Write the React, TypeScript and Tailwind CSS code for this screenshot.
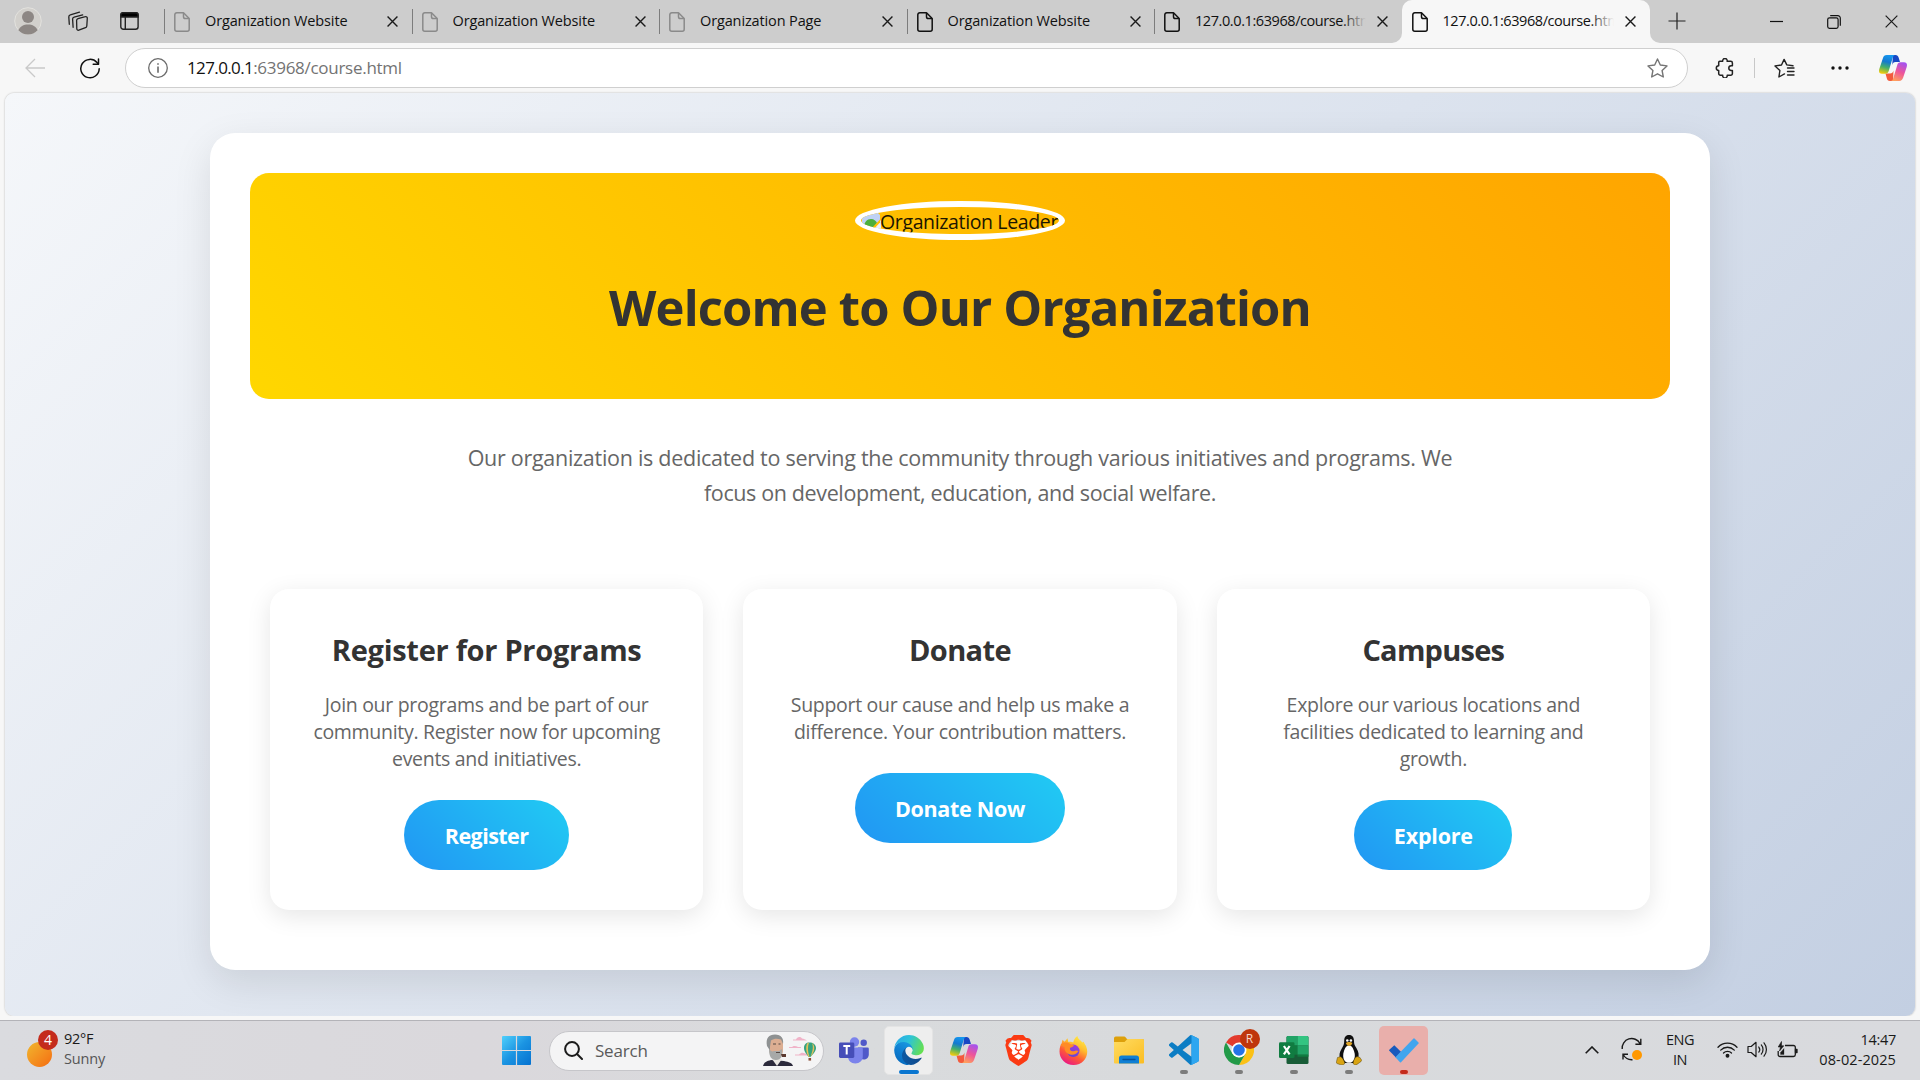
import React from "react";
import { SiBrave } from "react-icons/si";

/* ---------- browser chrome icons ---------- */

function DocIcon({ color }: { color: string }) {
  return (
    <svg className="h-5 w-4 shrink-0" viewBox="0 0 16 20" fill="none" stroke={color} strokeWidth="1.5" strokeLinejoin="round">
      <path d="M3 .8h6.5L15.2 6.500v10.7a2 2 0 0 1-2 2H2.800a2 2 0 0 1-2-2V2.800a2 2 0 0 1 2-2z" />
      <path d="M9.500 1v3.700a1.800 1.800 0 0 0 1.800 1.800H15" />
    </svg>
  );
}

function CloseIcon({ size }: { size: "sm" | "lg" }) {
  return (
    <svg className={size === "sm" ? "h-[11px] w-[11px] shrink-0" : "h-[13px] w-[13px] shrink-0"} viewBox="0 0 12 12" stroke="#1a1a1a" strokeWidth={size === "sm" ? 1.5 : 1.1} fill="none">
      <path d="M.6.6l10.800 10.800M11.400.6L.6 11.400" />
    </svg>
  );
}

function CopilotIcon({ id, className }: { id: string; className: string }) {
  return (
    <svg className={className} viewBox="0 0 28 26">
      <defs>
        <linearGradient id={`${id}-a`} x1="0.5" y1="0" x2="0.25" y2="1">
          <stop offset="0" stopColor="#1596ee" />
          <stop offset=".35" stopColor="#1479d0" />
          <stop offset=".65" stopColor="#45b06a" />
          <stop offset="1" stopColor="#f5cc0a" />
        </linearGradient>
        <linearGradient id={`${id}-b`} x1="0.7" y1="0" x2="0.3" y2="1">
          <stop offset="0" stopColor="#a552ee" />
          <stop offset=".5" stopColor="#ee5599" />
          <stop offset="1" stopColor="#ffa15c" />
        </linearGradient>
      </defs>
      <path d="M14 0h2.500c1.800 0 2.600 1 3.100 2.600L21 7h-4.500c-2 0-2.700 1-3.300 3z" fill="#1848c4" />
      <path d="M14 26h-3c-2 0-2.700-1-3.200-2.700L6.500 18.500H11c2 0 3-1 3.500-3z" fill="#f35a3c" />
      <path d="M7.800 0h8.600c-1.500.2-2.200 1.200-2.700 2.800L9.800 15.800c-.6 2-1.500 2.900-3.500 2.900H3c-2.700 0-3.500-2-2.700-4.600L3.900 3.200C4.600 1.200 5.600 0 7.800 0z" fill={`url(#${id}-a)`} />
      <path d="M20.200 26h-8.600c1.500-.2 2.200-1.200 2.700-2.800l3.900-13c.6-2 1.500-2.900 3.500-2.900H25c2.700 0 3.500 2 2.700 4.600l-3.600 10.900c-.7 2-1.700 3.200-3.900 3.200z" fill={`url(#${id}-b)`} />
    </svg>
  );
}

function Tab({ title, dim, active, fade }: { title: string; dim?: boolean; active?: boolean; fade?: boolean }) {
  return (
    <div className={active ? "relative flex h-[43px] w-[248px] items-center rounded-t-[10px] bg-[#f7f7f7] pl-[10px]" : "relative flex h-[43px] w-[247.5px] items-center pl-[10px]"}>
      {!active && <div className="absolute top-[9px] left-0 h-[25px] w-px bg-[#7d7d7d]" />}
      {active && (
        <>
          <div className="absolute bottom-0 -left-[10px] h-[10px] w-[10px] bg-[#f7f7f7]">
            <div className="h-full w-full rounded-br-[10px] bg-[#cdcdcd]" />
          </div>
          <div className="absolute -right-[10px] bottom-0 h-[10px] w-[10px] bg-[#f7f7f7]">
            <div className="h-full w-full rounded-bl-[10px] bg-[#cdcdcd]" />
          </div>
        </>
      )}
      <DocIcon color={dim ? "#8a8a8a" : "#111111"} />
      <div className={`relative mb-[2px] ml-[15px] w-[171px] overflow-hidden text-[14.5px] leading-5 whitespace-nowrap text-[#111] ${fade ? "tracking-[-0.42px]" : "tracking-[-0.13px]"}`}>
        {title}
        {fade && <div className={active ? "absolute inset-y-0 right-0 w-6 bg-linear-to-r from-transparent to-[#f7f7f7]" : "absolute inset-y-0 right-0 w-6 bg-linear-to-r from-transparent to-[#cdcdcd]"} />}
      </div>
      <div className="ml-[11px] flex">
        <CloseIcon size="sm" />
      </div>
    </div>
  );
}

function TabBar() {
  return (
    <div className="flex h-[43px] bg-[#cdcdcd]">
      <div className="flex w-[164px] items-center pb-px">
        <svg className="ml-[14px] h-[28px] w-[28px]" viewBox="0 0 28 28">
          <circle cx="14" cy="14" r="13.300" fill="#d2d0cc" stroke="#e3e2de" />
          <circle cx="14" cy="10" r="6" fill="#8d8784" />
          <path d="M4.300 23.200C6 19.500 9.500 17.500 14 17.500s8 2 9.700 5.700A13.300 13.300 0 0 1 14 27.500a13.300 13.300 0 0 1-9.700-4.300z" fill="#8d8784" />
        </svg>
        <svg className="ml-[25px] h-[21px] w-[21px]" viewBox="0 0 21 21" fill="none" stroke="#222" strokeWidth="1.300" strokeLinejoin="round" strokeLinecap="round">
          <path d="M11 7.600l7.400-1.900a1.500 1.500 0 0 1 1.900 1.600l-.5 7.700a2 2 0 0 1-1.300 1.700l-6.700 2.500a1.500 1.500 0 0 1-2-1.400l-.2-8.300A2 2 0 0 1 11 7.600z" />
          <path d="M6.100 16.300l-.5-8.200a2 2 0 0 1 1.500-2l8.600-2.300" />
          <path d="M2.300 13.300L1.800 5.900a2 2 0 0 1 1.500-2L12.500 1.200" />
        </svg>
        <svg className="ml-[32px] h-[18px] w-[19px]" viewBox="0 0 19 18" fill="none" stroke="#222" strokeWidth="1.400">
          <rect x=".8" y=".8" width="17.300" height="16.400" rx="2.500" />
          <path d="M.8 5V3A2.200 2.200 0 0 1 3 .8h13A2.200 2.200 0 0 1 18.100 3v2z" fill="#000" />
          <path d="M5.300 5v12" />
        </svg>
      </div>
      <Tab title="Organization Website" dim />
      <Tab title="Organization Website" dim />
      <Tab title="Organization Page" dim />
      <Tab title="Organization Website" />
      <Tab title="127.0.0.1:63968/course.html" fade />
      <Tab title="127.0.0.1:63968/course.html" active fade />
      <svg className="mt-[12px] ml-[18px] h-[18px] w-[18px]" viewBox="0 0 18 18" stroke="#222" strokeWidth="1.200">
        <path d="M9 .5v17M.5 9h17" />
      </svg>
      <div className="ml-auto flex items-center pr-[22px]">
        <svg className="h-[13px] w-[13px]" viewBox="0 0 13 13" stroke="#111" strokeWidth="1.200">
          <path d="M0 6.500h13" />
        </svg>
        <svg className="ml-[44px] h-[14px] w-[14px]" viewBox="0 0 14 14" fill="none" stroke="#111" strokeWidth="1.200">
          <rect x=".7" y="2.800" width="10.400" height="10.500" rx="1.800" />
          <path d="M3.200.7h7.600a2.500 2.500 0 0 1 2.500 2.500v7.600" />
        </svg>
        <div className="ml-[44px]">
          <CloseIcon size="lg" />
        </div>
      </div>
    </div>
  );
}

function Toolbar() {
  return (
    <div className="flex h-[50px] items-center bg-[#f7f7f7]">
      <svg className="ml-[25px] h-5 w-5" viewBox="0 0 20 20" fill="none" stroke="#c9c9c9" strokeWidth="1.300">
        <path d="M10 1L1 10l9 9M1 10h19" />
      </svg>
      <svg className="ml-[35px] h-[21px] w-[20px]" viewBox="0 0 20 21" fill="none" stroke="#111" strokeWidth="1.500" strokeLinecap="round" strokeLinejoin="round">
        <path d="M19.200 10.700A9.200 9.200 0 1 1 17 4.600l1.200 1.400" />
        <path d="M18.500 1v5.300h-5.300" />
      </svg>
      <div className="ml-[25px] flex h-[40px] w-[1563px] items-center rounded-full border border-[#cfcfcf] bg-white pl-[22px] pr-[19px]">
        <svg className="h-5 w-5" viewBox="0 0 20 20" fill="none" stroke="#6b6b6b" strokeWidth="1.300">
          <circle cx="10" cy="10" r="9.300" />
          <path d="M10 8.500v6.300M10 5.200v1.600" strokeWidth="1.600" />
        </svg>
        <div className="mb-px ml-[19px] text-[17px] leading-6 whitespace-nowrap text-[#737373]">
          <span className="tracking-[-0.62px] text-[#111]">127.0.0.1</span>
          <span className="tracking-[-0.28px]">:63968/course.html</span>
        </div>
        <svg className="ml-auto h-5 w-[21px]" viewBox="0 0 21 20" fill="none" stroke="#757575" strokeWidth="1.400" strokeLinejoin="round">
          <path d="M10.500 1l2.800 6 6.700.9-4.900 4.600 1.200 6.500-5.800-3.200L4.700 19l1.200-6.500L1 7.900 7.700 7z" />
        </svg>
      </div>
      <svg className="ml-[27px] h-[20px] w-[19px]" viewBox="0 0 19 20" fill="none" stroke="#222" strokeWidth="1.500" strokeLinejoin="round">
        <path d="M4.800 3.300h2.900a2.300 2.300 0 1 1 4.500 0h3.500a1.700 1.700 0 0 1 1.700 1.700v2.700h-1.200a2.400 2.400 0 0 0 0 4.800h1.200v3a1.700 1.700 0 0 1-1.700 1.700h-3.500a2.300 2.300 0 1 1-4.500 0H5.400a1.700 1.700 0 0 1-1.700-1.700v-3a2.400 2.400 0 1 1 0-4.800V4.500a1.200 1.200 0 0 1 1.100-1.200z" />
      </svg>
      <div className="ml-[20px] h-5 w-px bg-[#c8c8c8]" />
      <svg className="ml-[19px] h-5 w-[21px]" viewBox="0 0 21 20" fill="none" stroke="#222" strokeWidth="1.400" strokeLinejoin="round" strokeLinecap="round">
        <path d="M10.500 15.900L4.900 19l1-6.500L1 7.900 7.500 7l2.600-5.600 2.700 5.500 6.200.9M13.500 10h6.500M13.500 13.500h6.500M13.500 17h6.500" />
      </svg>
      <svg className="ml-[36px] h-1 w-[18px]" viewBox="0 0 18 4" fill="#111">
        <circle cx="2" cy="2" r="1.700" />
        <circle cx="9" cy="2" r="1.700" />
        <circle cx="16" cy="2" r="1.700" />
      </svg>
      <CopilotIcon id="cp-toolbar" className="ml-[30px] h-[26px] w-[28px]" />
    </div>
  );
}

/* ---------- page ---------- */

function BrokenImage() {
  return (
    <div className="flex h-[39px] w-[210px] overflow-hidden rounded-[50%] border-[6px] border-white pt-[2px] whitespace-nowrap">
      <svg className="mt-[2px] h-[19px] w-[20px] shrink-0" viewBox="0 0 20 19">
        <path d="M1 0h14l4 4v15H1z" fill="#bfd2f5" />
        <path d="M3 17c0-6 3-9 7-9 3 0 5 2 6 4l-5 7H3z" fill="#4caf3c" />
        <path d="M10 19L20 9v10z" fill="#e9f0fc" />
        <path d="M9 19L19 8.500v3L12 19z" fill="#ffc000" />
      </svg>
      <span className="-ml-px text-[19.5px] leading-[25px] tracking-[-0.36px] text-[#1c1600]">Organization Leader</span>
    </div>
  );
}

const CARDS = [
  { title: "Register for Programs", lines: ["Join our programs and be part of our", "community. Register now for upcoming", "events and initiatives."], action: "Register", width: "w-[165px]", titleTrack: "tracking-[-0.28px]", actionTrack: "tracking-[-0.55px]" },
  { title: "Donate", lines: ["Support our cause and help us make a", "difference. Your contribution matters."], action: "Donate Now", width: "w-[210px]", titleTrack: "tracking-[-0.6px]", actionTrack: "tracking-[-0.3px]" },
  { title: "Campuses", lines: ["Explore our various locations and", "facilities dedicated to learning and", "growth."], action: "Explore", width: "w-[158px]", titleTrack: "tracking-[-0.75px]", actionTrack: "tracking-[-0.2px]" },
];

function Page() {
  return (
    <main className="mx-[5px] h-[923px] overflow-hidden rounded-[9px] bg-[linear-gradient(135deg,#f5f7fa,#c3cfe2)] pt-[40px] shadow-[0_0_2px_rgba(0,0,0,0.3)]">
      <div className="mx-auto h-[837px] w-[1500px] rounded-[25px] bg-white p-[40px] shadow-[0_12px_38px_rgba(0,0,0,0.1)]">
        <header className="flex h-[226px] flex-col items-center rounded-[19px] bg-[linear-gradient(45deg,#ffd700,#ffa500)] pt-[28px]">
          <BrokenImage />
          <h1 className="mt-[34px] text-[49px] leading-[67px] font-bold tracking-[-0.86px] text-[#333]">Welcome to Our Organization</h1>
        </header>
        <div className="mt-[41px] text-center text-[21.5px] leading-[35px] text-[#666]">
          <p className="tracking-[-0.28px]">Our organization is dedicated to serving the community through various initiatives and programs. We</p>
          <p className="tracking-[-0.37px]">focus on development, education, and social welfare.</p>
        </div>
        <div className="mt-[79px] grid h-[321px] grid-cols-3 gap-[40px] px-[20px]">
          {CARDS.map((card) => (
            <section key={card.title} className="flex flex-col items-center rounded-[19px] bg-white pt-[41px] text-center shadow-[0_6px_25px_rgba(0,0,0,0.1)]">
              <h3 className={`text-[29px] leading-[40px] font-bold text-[#333] ${card.titleTrack}`}>{card.title}</h3>
              <div className="mt-[21px] text-[19.5px] leading-[27px] tracking-[-0.3px] text-[#666]">
                {card.lines.map((line) => (
                  <p key={line}>{line}</p>
                ))}
              </div>
              <button className={`mt-[28px] h-[70px] rounded-[35px] bg-[linear-gradient(45deg,#2196f3,#21cbf3)] pt-[3px] text-[21.5px] font-bold text-white ${card.width} ${card.actionTrack}`}>{card.action}</button>
            </section>
          ))}
        </div>
      </div>
    </main>
  );
}

/* ---------- taskbar ---------- */

function SearchArt() {
  return (
    <svg className="h-[33px] w-[54px]" viewBox="0 0 54 33">
      <path d="M30 5.500h3c1-2.500 4-3.500 6-1 2 0 3 1 5 2H30zM26 13h3c1-1.500 4-1.500 6 0h3v1H26zM32 20.500h4c2-2 4-2 6-1l7 1v1H32z" fill="#f0b3c8" />
      <path d="M0 32c1-4 4-5 8-6l13 1c5 1 8 2 9 5z" fill="#2c2a3c" />
      <path d="M9 25l5 7 5-7z" fill="#e9e6e2" />
      <path d="M6 8c0-4 3-7 7-7s7 3 7 8v7c0 5-3 8-6 8s-8-3-8-9z" fill="#dcae92" />
      <path d="M4 12C2.500 4 6 .5 12 .5s9 4 8 9.500l-2-4.500c-4-1-7-1-10 1l-1 6v4z" fill="#8e9192" />
      <path d="M6 15c2 2 3 3 5 2h5l3-2c1 7-1 11-6 11S6 22 6 15z" fill="#a7a9a8" />
      <path d="M10 10h3M15.500 10h2M13 18.500h4" stroke="#574a45" strokeWidth="1.200" />
      <path d="M18 20h5v3h-4z" fill="#5a3930" />
      <path d="M41 14c0-3.500 2-5.500 5.500-5.500S53 10.500 53 14s-3.500 6.500-5.500 9h-2C44 20.500 41 18 41 14z" fill="#35a37f" />
      <path d="M44 9.500c-1.500 4-1 9 1.500 13.500h1C44.500 17 44.500 13 46 8.500zM49 9c2 4.500 0 9.500-1.500 14l2-3c2-3 2.500-7.500.5-10z" fill="#e5c05c" />
      <path d="M45.500 24h2.600v2.600h-2.600z" fill="#8d4f36" />
    </svg>
  );
}

function TeamsIcon() {
  return (
    <svg className="h-[27px] w-[30px]" viewBox="0 0 30 27">
      <circle cx="15.500" cy="5" r="4.700" fill="#7b83eb" />
      <circle cx="24.700" cy="5.700" r="3.200" fill="#5059c9" />
      <path d="M19 10.500h9.500a1.300 1.300 0 0 1 1.300 1.300v5.700c0 3-2.500 5-5 5s-5-1-5.800-3z" fill="#5059c9" />
      <path d="M9 10.500h13.500a1.300 1.300 0 0 1 1.300 1.300v7.700c0 4-3.200 7-7.500 7S9 23.500 9 19.500z" fill="#7b83eb" />
      <rect x="0" y="5.500" width="15.300" height="15.500" rx="1.400" fill="#464eb8" />
      <path d="M4.300 9h6.900M7.700 9v8.500" stroke="#fff" strokeWidth="2" />
    </svg>
  );
}

function EdgeIcon() {
  return (
    <svg className="h-[30px] w-[30px]" viewBox="4 0 257 259">
      <defs>
        <linearGradient id="edge-dark" x1="0" y1="0" x2="1" y2="0">
          <stop offset="0" stopColor="#0c59a4" />
          <stop offset="1" stopColor="#114a8b" />
        </linearGradient>
        <linearGradient id="edge-mid" x1="0.8" y1="0" x2="0.3" y2="1">
          <stop offset="0" stopColor="#1b9de2" />
          <stop offset=".5" stopColor="#0f7fd2" />
          <stop offset="1" stopColor="#0669bd" />
        </linearGradient>
        <linearGradient id="edge-top" x1="0" y1="0.3" x2="1" y2="0.6">
          <stop offset="0" stopColor="#2aa9e8" />
          <stop offset=".45" stopColor="#2dc3d8" />
          <stop offset="1" stopColor="#66e04f" />
        </linearGradient>
      </defs>
      <path fill="url(#edge-dark)" d="M235.680 195.460a93.730 93.730 0 0 1-10.540 4.710 101.870 101.870 0 0 1-35.900 6.460c-47.320 0-88.540-32.550-88.540-74.320A31.480 31.480 0 0 1 117.130 105c-42.800 1.800-53.800 46.400-53.800 72.530 0 73.880 68.090 81.370 82.760 81.370 7.910 0 19.840-2.300 27-4.560l1.310-.44a128.340 128.340 0 0 0 66.600-52.800 4 4 0 0 0-5.320-5.640z" />
      <path fill="url(#edge-mid)" d="M110.340 246.340A79.200 79.200 0 0 1 87.600 225a80.720 80.720 0 0 1 29.530-120c3.120-1.470 8.450-4.130 15.540-4a32.350 32.350 0 0 1 25.690 13 31.880 31.880 0 0 1 6.360 18.660c0-.21 24.460-79.600-80-79.600-43.900 0-80 41.660-80 78.210a130.150 130.150 0 0 0 12.110 56 128 128 0 0 0 156.380 67.110 75.550 75.550 0 0 1-62.780-8z" />
      <path fill="url(#edge-top)" d="M156.940 153.780c-.81 1.050-3.300 2.500-3.300 5.660 0 2.610 1.700 5.120 4.720 7.230 14.380 10 41.490 8.680 41.560 8.680a59.560 59.560 0 0 0 30.270-8.350 61.380 61.380 0 0 0 30.430-52.880c.26-22.410-8-37.310-11.340-43.910C228.090 28.760 182.350.2 132.610.2a128 128 0 0 0-128 126.200c.48-36.540 36.800-66.050 80-66.050 3.500 0 23.460.34 42 10.070 16.340 8.580 24.900 18.940 30.850 29.210 6.180 10.670 7.280 24.150 7.280 29.520 0 5.370-2.740 13.330-7.800 19.630z" />
    </svg>
  );
}

function BraveIcon() {
  return (
    <div className="relative h-[31px] w-[28px]">
      <svg className="absolute inset-0 h-[31px] w-[28px]" viewBox="0 0 28 31">
        <path d="M7 6h14l3 6-3 10-7 6-7-6L4 12z" fill="#fff" />
      </svg>
      <SiBrave className="absolute -inset-x-[1.5px] top-0 h-[31px] w-[31px] text-[#fb3a13]" />
    </div>
  );
}

function FirefoxIcon() {
  return (
    <svg className="h-[29px] w-[29px]" viewBox="0 0 29 29">
      <defs>
        <linearGradient id="ff-body" x1="0.8" y1="0" x2="0.25" y2="1">
          <stop offset="0" stopColor="#fff04a" />
          <stop offset=".35" stopColor="#ffbd2e" />
          <stop offset=".65" stopColor="#ff5a36" />
          <stop offset="1" stopColor="#e8128b" />
        </linearGradient>
        <linearGradient id="ff-globe" x1="0.7" y1="0" x2="0.3" y2="1">
          <stop offset="0" stopColor="#a33bdc" />
          <stop offset="1" stopColor="#5b48d8" />
        </linearGradient>
      </defs>
      <path d="M18.500 0c.3 3 3 4 5 6.500l1.300-.8c.2 1.500 1.200 2.300 2.200 4.300 4 9-2 19-12.500 19C6.500 29 .5 23 .5 15.500c0-4 1-6.500 2.200-8.200l.8-3.500 2 2 3-3.500.8 3.700c2-.4 4 0 5 .6C14.500 4 16 1.500 18.500 0z" fill="url(#ff-body)" />
      <circle cx="14.300" cy="14.800" r="6.200" fill="url(#ff-globe)" />
      <path d="M1.500 9c2-2 5-3 8-2 1 .5 3 2 5.500 2-.5 2-3 2-4 3-.5 2 1 3.500 3.500 3.200 2-.3 3-1.500 5-.2-1.500 3-5 4.500-8.500 3.500C6 17 5 13 6 11 4 10 2.500 10 1.500 9z" fill="#ff8b25" />
    </svg>
  );
}

function FolderIcon() {
  return (
    <svg className="h-[28px] w-[30px]" viewBox="0 0 30 28">
      <defs>
        <linearGradient id="folder" x1="0" y1="0" x2="1" y2="1">
          <stop offset="0" stopColor="#ffdc62" />
          <stop offset="1" stopColor="#fbbd22" />
        </linearGradient>
      </defs>
      <path d="M0 2.200A1.700 1.700 0 0 1 1.700.5h8c1 0 1.500.4 2 1L13 3h15.500A1.500 1.500 0 0 1 30 4.500V8H0z" fill="#dda00b" />
      <path d="M0 6h10.500L13.500 3H28.500A1.500 1.500 0 0 1 30 4.500v22a1 1 0 0 1-1 1H1a1 1 0 0 1-1-1z" fill="url(#folder)" />
      <path d="M5 27.500V22a2.500 2.500 0 0 1 2.500-2.500h15A2.500 2.500 0 0 1 25 22v5.500z" fill="#0f7fd4" />
      <path d="M9 23.500h12" stroke="#06509a" strokeWidth="1.300" strokeLinecap="round" />
    </svg>
  );
}

function VsCodeIcon() {
  return (
    <svg className="h-[30px] w-[30px]" viewBox="0 0 24 24">
      <path fill="#0c7dc4" d="M23.150 2.587L18.210.21a1.494 1.494 0 0 0-1.705.29l-9.460 8.630-4.120-3.128a.999.999 0 0 0-1.276.057L.327 7.261A1 1 0 0 0 .326 8.740L3.899 12 .326 15.260a1 1 0 0 0 .001 1.479L1.650 17.940a.999.999 0 0 0 1.276.057l4.120-3.128 9.460 8.630a1.492 1.492 0 0 0 1.704.29l4.942-2.377A1.500 1.500 0 0 0 24 20.060V3.939a1.500 1.500 0 0 0-.85-1.352zm-5.146 14.861L10.826 12l7.178-5.448v10.896z" />
      <path fill="#2ea6f0" d="M18 .2l5.150 2.387A1.500 1.500 0 0 1 24 3.939V20.060a1.500 1.500 0 0 1-.85 1.352L18.210 23.790c-.3.150-.8.150-1.200 0 .7 0 1-.5 1-1.100V1.300c0-.6-.3-1-.9-1.100z" />
    </svg>
  );
}

function ChromeIcon() {
  return (
    <div className="relative h-[30px] w-[30px]">
      <svg className="h-[30px] w-[30px]" viewBox="0 0 30 30">
        <path d="M15 15L2 7.500A15 15 0 0 1 28 7.500z" fill="#e33b2e" />
        <path d="M15 15V7.500h13A15 15 0 0 1 15 30l6.500-11.200z" fill="#fbc116" />
        <path d="M2 7.500L8.500 18.700 15 22.500l6.500-3.700L15 30A15 15 0 0 1 2 7.500z" fill="#229a48" />
        <circle cx="15" cy="15" r="7.500" fill="#fff" />
        <circle cx="15" cy="15" r="5.800" fill="#2573e8" />
      </svg>
      <div className="absolute -top-[6px] left-[16px] flex h-5 w-5 items-center justify-center rounded-full bg-[#bf360c] text-[12px] leading-none text-[#f6d6c8]">R</div>
    </div>
  );
}

function ExcelIcon() {
  return (
    <svg className="h-[28px] w-[30px]" viewBox="0 0 30 28">
      <rect x="7.500" y="0" width="22" height="28" rx="1.500" fill="#185c37" />
      <path d="M9 0h9.500v9.500h-11v-8A1.500 1.500 0 0 1 9 0z" fill="#21a366" />
      <path d="M18.500 0H28a1.500 1.500 0 0 1 1.500 1.500v8h-11z" fill="#33c481" />
      <path d="M7.500 9.500h11v9.200h-11z" fill="#107c41" />
      <path d="M18.500 9.500h11v9.200h-11z" fill="#21a366" />
      <path d="M18.500 18.700h11v2h-11z" fill="#107c41" />
      <rect x="0" y="6.200" width="15.500" height="15.800" rx="1.300" fill="#107c41" />
      <path d="M4.900 10l5.700 8.300M10.600 10l-5.700 8.300" stroke="#fff" strokeWidth="2.200" />
    </svg>
  );
}

function TuxIcon() {
  return (
    <svg className="h-[30px] w-[26px]" viewBox="0 0 26 30">
      <path d="M13 0c3.600 0 5 2.600 5 6 0 3 .6 4.300 2.500 7.300 2.300 3.700 2.700 6.700 1.500 10.700l-3 4H7l-3-4c-1-4-.6-6.500 1.500-10C7.500 10.700 8.200 9 8.200 6 8.200 2.500 9.500 0 13 0z" fill="#101010" />
      <path d="M13 10.500c3 0 4 2.500 5 5.500 1.400 4 1 7-.5 9.500-1 1.700-2.500 2.300-4.500 2.300s-3.600-.6-4.600-2.300C7 23 6.700 19.500 8 16c1-3 2-5.500 5-5.500z" fill="#fff" />
      <circle cx="11.300" cy="5.500" r="1.300" fill="#fff" />
      <circle cx="14.900" cy="5.500" r="1.300" fill="#fff" />
      <path d="M9.800 8c1-1.500 5.400-1.500 6.600 0-.6 2-2.100 2.800-3.300 2.800S10.400 10 9.800 8z" fill="#e0a526" />
      <path d="M1.500 22.500l3.200-.8c2 1.500 3.500 4 4 6.300-.2 1.800-2 2.200-4 1.800L1 28.500c-1-.5-.8-1.500-.3-2.800zM24 22.500l-2.800-1c-2 .8-3.600 3-4 6.300 0 2 1.800 2.600 3.800 1.600l4-2.900c1-.8.900-1.500-.2-2.500z" fill="#d9a413" stroke="#57440f" strokeWidth=".5" />
    </svg>
  );
}

function TodoIcon() {
  return (
    <svg className="h-[25px] w-[30px]" viewBox="0 0 30 25">
      <path d="M5.300 7.200l6.900 6.900-5.300 5.300L.3 12.700a.8.8 0 0 1 0-1z" fill="#185abd" />
      <path d="M24.500.4a1 1 0 0 1 1 0l4 4a1 1 0 0 1 0 1.200L12 24.200a.8.8 0 0 1-1 0l-4.600-5z" fill="#41a5ee" />
    </svg>
  );
}

function TaskCell({ children, mark, tile }: { children: React.ReactNode; mark?: "idle" | "active" | "alert"; tile?: "white" | "red" }) {
  return (
    <div className="flex h-[60px] w-[55px] justify-center">
      <div className={`relative mt-[5px] flex h-[49px] w-[49px] items-center justify-center rounded-[5px] ${tile === "white" ? "border border-[#e4e4e4] bg-[#eeeeee]" : tile === "red" ? "bg-[#e9afab]" : ""}`}>
        {children}
        {mark === "idle" && <div className="absolute bottom-px h-1 w-2 rounded-full bg-[#7c7c7c]" />}
        {mark === "active" && <div className="absolute bottom-0 h-1 w-5 rounded-full bg-[#0a76d0]" />}
        {mark === "alert" && <div className="absolute bottom-px h-1 w-2 rounded-full bg-[#c42b1c]" />}
      </div>
    </div>
  );
}

function Taskbar() {
  return (
    <div className="flex h-[60px] items-center border-t border-[#b3b3b8] bg-[linear-gradient(90deg,#dadbdf,#dad8dc_25%,#d9dbdd_45%,#d8dadc_60%,#d9dade)] text-[14.5px] leading-[20px] text-[#1a1a1a]">
      <div className="flex w-[502px] items-center pb-[3px] pl-[27px]">
        <div className="relative h-[36px] w-[31px]">
          <div className="absolute bottom-0 left-0 h-[25px] w-[25px] rounded-full bg-linear-to-br from-[#efb62e] to-[#f46a10]" />
          <div className="absolute top-[-1px] left-[11px] flex h-5 w-5 items-center justify-center rounded-full bg-[#c42b1c] text-[14px] text-white">4</div>
        </div>
        <div className="ml-[6px]">
          <div className="tracking-[-0.3px]">92°F</div>
          <div className="tracking-[-0.15px] text-[#555]">Sunny</div>
        </div>
      </div>
      <svg className="h-[29px] w-[29px]" viewBox="0 0 29 29">
        <defs>
          <linearGradient id="win" x1="0" y1="0" x2="29" y2="29" gradientUnits="userSpaceOnUse">
            <stop offset="0" stopColor="#4fd0fc" />
            <stop offset=".5" stopColor="#1b94e2" />
            <stop offset="1" stopColor="#0571d0" />
          </linearGradient>
        </defs>
        <path fill="url(#win)" d="M1 0h12.900v13.900H0V1a1 1 0 0 1 1-1zM15.100 0H28a1 1 0 0 1 1 1v12.900H15.100zM0 15.100h13.900V29H1a1 1 0 0 1-1-1zM15.100 15.100H29V28a1 1 0 0 1-1 1H15.100z" />
      </svg>
      <div className="ml-[18px] flex h-[40px] w-[275px] items-center rounded-full border border-[#c6c6ca] bg-[#f4f4f5] pl-[14px] pr-[6px]">
        <svg className="h-[19px] w-[19px]" viewBox="0 0 19 19" fill="none" stroke="#1b1b1b" strokeWidth="2" strokeLinecap="round">
          <circle cx="8" cy="8" r="6.900" />
          <path d="M13 13l5 5" />
        </svg>
        <span className="ml-[12px] text-[17px] tracking-[-0.2px] text-[#5a5a5a]">Search</span>
        <div className="ml-auto">
          <SearchArt />
        </div>
      </div>
      <div className="ml-[2px] flex">
        <TaskCell><TeamsIcon /></TaskCell>
        <TaskCell tile="white" mark="active"><EdgeIcon /></TaskCell>
        <TaskCell><CopilotIcon id="cp-taskbar" className="h-[26px] w-[28px]" /></TaskCell>
        <TaskCell><BraveIcon /></TaskCell>
        <TaskCell><FirefoxIcon /></TaskCell>
        <TaskCell><FolderIcon /></TaskCell>
        <TaskCell mark="idle"><VsCodeIcon /></TaskCell>
        <TaskCell mark="idle"><ChromeIcon /></TaskCell>
        <TaskCell mark="idle"><ExcelIcon /></TaskCell>
        <TaskCell mark="idle"><TuxIcon /></TaskCell>
        <TaskCell tile="red" mark="alert"><TodoIcon /></TaskCell>
      </div>
      <div className="ml-auto flex items-center pr-[24px] pb-[2px]">
        <svg className="h-[8px] w-[14px]" viewBox="0 0 14 8" fill="none" stroke="#1a1a1a" strokeWidth="1.600">
          <path d="M.7 7.300L7 1l6.300 6.300" />
        </svg>
        <svg className="ml-[22px] h-[25px] w-[22px]" viewBox="0 0 22 25" fill="none" stroke="#1a1a1a" strokeWidth="1.400">
          <path d="M1.200 12A9.500 9.500 0 0 1 19 6.500M19.800 1.800v5.400h-5.400M2 22.500v-5.200h5M2.500 18c2 3.500 5 5 9 4.700" />
          <circle cx="16" cy="18" r="5" fill="#ff9800" stroke="none" />
        </svg>
        <div className="ml-[22px] w-[30px] text-center tracking-[-0.5px]">
          <div>ENG</div>
          <div>IN</div>
        </div>
        <svg className="ml-[22px] h-[17px] w-[21px]" viewBox="0 0 21 17" fill="none" stroke="#1a1a1a" strokeWidth="1.300" strokeLinecap="round">
          <path d="M1 6.200a13.300 13.300 0 0 1 19 0M3.700 9.100a9.500 9.500 0 0 1 13.600 0M6.500 12a5.700 5.700 0 0 1 8 0" />
          <circle cx="10.500" cy="14.800" r="1.300" fill="#1a1a1a" />
        </svg>
        <svg className="ml-[9px] h-[17px] w-[21px]" viewBox="0 0 21 17" fill="none" stroke="#1a1a1a" strokeWidth="1.200" strokeLinejoin="round" strokeLinecap="round">
          <path d="M1 5.500h3.200L9 1.300v14.400L4.200 11.500H1z" />
          <path d="M11.800 6a4 4 0 0 1 0 5M14.300 3.900a7 7 0 0 1 0 9.200M17 1.800a10.500 10.500 0 0 1 0 13.400" />
        </svg>
        <svg className="ml-[9px] h-[17px] w-[21px]" viewBox="0 0 21 17" fill="none" stroke="#1a1a1a" strokeWidth="1.300" strokeLinejoin="round">
          <path d="M8 4.500h8.500a1.800 1.800 0 0 1 1.800 1.800v7.400a1.800 1.800 0 0 1-1.800 1.800H3A1.800 1.800 0 0 1 1.200 13.700V10" />
          <path d="M18.500 8.500h1.500v3h-1.500z" fill="#1a1a1a" />
          <path d="M4.500.5L1.200 6h2.300l-1 4L6.800 4.800H4.500z" fill="#1a1a1a" strokeWidth=".6" />
          <path d="M3.500 13.500V11.500l3.500-4v6z" fill="#1a1a1a" strokeWidth=".3" />
        </svg>
        <div className="ml-[19px] w-[79px] text-right">
          <div className="tracking-[-0.28px]">14:47</div>
          <div className="tracking-[0.1px]">08-02-2025</div>
        </div>
      </div>
    </div>
  );
}

export default function App() {
  return (
    <div className="h-[1080px] w-[1920px] overflow-hidden bg-[#f7f7f7] font-['Open_Sans','Noto_Sans',sans-serif]">
      <TabBar />
      <Toolbar />
      <Page />
      <div className="h-[4px] bg-[#f7f7f7]" />
      <Taskbar />
    </div>
  );
}
